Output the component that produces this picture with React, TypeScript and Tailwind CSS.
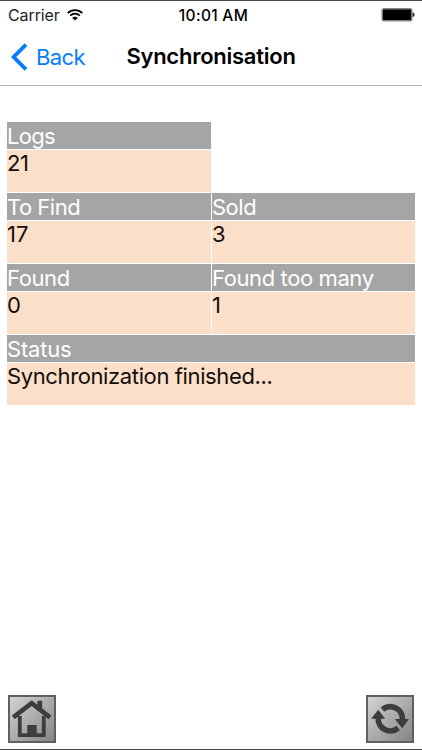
type CellProps = { label: string; value: string; className?: string; labelClass?: string; valueClass?: string };

function Cell({ label, value, className = "", labelClass = "", valueClass = "" }: CellProps) {
  return (
    <div className={`flex flex-col gap-px ${className}`}>
      <div className="h-[27px] overflow-hidden bg-[#a5a5a5] text-white">
        <span className={`block whitespace-nowrap leading-[28px] ${labelClass}`}>{label}</span>
      </div>
      <div className="h-[42px] bg-[#fcdfc8] text-[#140e0a]">
        <span className={`block whitespace-nowrap leading-[27px] ${valueClass}`}>{value}</span>
      </div>
    </div>
  );
}

function WifiIcon() {
  return (
    <svg className="ml-[7px] h-[12px] w-[16px]" viewBox="0 0 16 12" fill="none" stroke="#000">
      <path d="M0.7 4.1C4.9 0.1 11.1 0.1 15.3 4.1" strokeWidth="1.8" />
      <path d="M3.2 6.7C6 4.1 10 4.1 12.8 6.7" strokeWidth="1.8" />
      <path d="M5.2 8.9C6.8 7.4 9.2 7.4 10.8 8.9L8 11.6Z" fill="#000" stroke="none" />
    </svg>
  );
}

function BatteryIcon() {
  return (
    <svg className="h-[14px] w-[34px]" viewBox="0 0 34 14">
      <rect x="1.2" y="0.8" width="29.6" height="12" rx="1.8" fill="#000" stroke="#858585" strokeWidth="1.5" />
      <path d="M31.5 4.8h0.8q1.2 0 1.2 2t-1.2 2h-0.8z" fill="#222" />
    </svg>
  );
}

function HomeIcon() {
  return (
    <svg className="h-full w-full" viewBox="0 0 44 44">
      <path d="M9.8 19V38.2H33.8V19" fill="none" stroke="#3d3d3d" strokeWidth="3.8" />
      <path d="M27.4 3.8H32.2V14H27.4Z" fill="#3d3d3d" />
      <path d="M3.2 20.4L21.7 6.2L40 20.4" fill="none" stroke="#3d3d3d" strokeWidth="4.6" />
      <rect x="17.3" y="28" width="9.4" height="11" fill="#3d3d3d" />
    </svg>
  );
}

function RefreshIcon() {
  return (
    <svg className="h-full w-full" viewBox="0 0 44 44">
      <g fill="none" stroke="#3d3d3d" strokeWidth="5.6">
        <path d="M14.4 12.6A12.2 12.2 0 0 1 34.4 22.8" />
        <path d="M30.2 31A12.2 12.2 0 0 1 10.2 20.6" />
      </g>
      <path d="M26.8 22H41L34.2 31.2Z" fill="#3d3d3d" />
      <path d="M3.2 21.8H17.2L10.2 12.8Z" fill="#3d3d3d" />
    </svg>
  );
}

export default function App() {
  return (
    <div className="flex h-[750px] w-[422px] flex-col border-y border-[#4a484c] bg-white font-['Inter','Liberation_Sans',sans-serif] text-black">
      <div className="grid h-[27px] grid-cols-3 items-center pt-px pr-[7px] pl-[8px]">
        <div className="flex items-center text-[#222]">
          <span className="text-[16px] tracking-[-0.1px]">Carrier</span>
          <WifiIcon />
        </div>
        <span className="pt-px pl-[4px] text-center text-[15.5px] font-medium tracking-[0.3px] whitespace-nowrap">10:01 AM</span>
        <div className="flex justify-end"><BatteryIcon /></div>
      </div>

      <nav className="grid h-[58px] shrink-0 grid-cols-[124px_174px_1fr] items-center border-b border-[#b2b2b2]">
        <button className="flex items-center pl-[10px] text-[#087dfa]">
          <svg className="h-[28px] w-[18px]" viewBox="0 0 18 28" fill="none" stroke="currentColor" strokeWidth="3.8">
            <path d="M16 1.6L3.6 14L16 26.4" />
          </svg>
          <span className="ml-[8px] pt-px text-[22px] tracking-[-0.6px]">Back</span>
        </button>
        <h1 className="text-center text-[22px] font-semibold tracking-[-0.25px]">Synchronisation</h1>
      </nav>

      <main className="mt-[36px] grid grid-cols-[204px_203px] gap-px px-[7px] text-[22px]">
        <Cell label="Logs" value="21" labelClass="tracking-[-0.7px]" valueClass="tracking-[-0.4px]" />
        <div />
        <Cell label="To Find" value="17" labelClass="tracking-[-0.5px]" />
        <Cell label="Sold" value="3" labelClass="tracking-[-0.5px]" />
        <Cell label="Found" value="0" labelClass="tracking-[-0.4px]" />
        <Cell label="Found too many" value="1" labelClass="tracking-[-0.4px]" />
        <Cell
          label="Status"
          value="Synchronization finished..."
          className="col-span-2"
          labelClass="tracking-[-0.2px]"
          valueClass="tracking-[-0.38px]"
        />
      </main>

      <footer className="mt-auto mb-[6px] flex justify-between px-[8px]">
        <button className="h-[48px] w-[48px] border-2 border-[#606060] bg-linear-to-br from-[#d4d4d4] to-[#858585]"><HomeIcon /></button>
        <button className="h-[48px] w-[48px] border-2 border-[#606060] bg-linear-to-br from-[#d4d4d4] to-[#858585]"><RefreshIcon /></button>
      </footer>
    </div>
  );
}
